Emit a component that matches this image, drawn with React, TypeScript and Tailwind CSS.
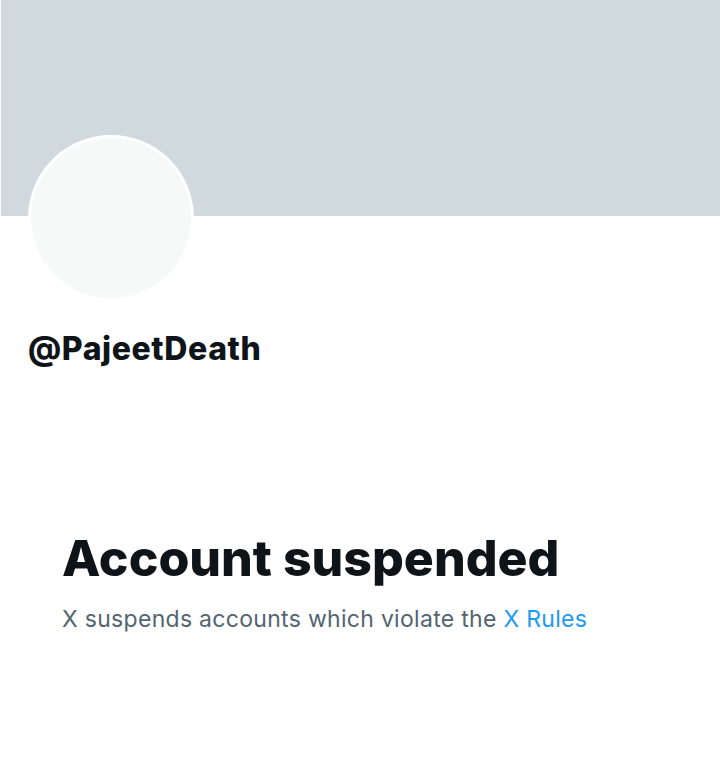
import React from 'react';

const SuspendedProfile: React.FC = () => {
  return (
    <div className="w-[720px] h-[784px] bg-white overflow-hidden" style={{ fontFamily: 'Inter, "Noto Sans", sans-serif' }}>
      {/* header banner */}
      <div className="ml-px h-[216px] bg-[#cfd9de]" />

      {/* avatar overlaps the banner */}
      <div className="pl-[28px] -mt-[81px]">
        <div className="w-[166px] h-[166px] rounded-full border-[3px] border-white bg-[#f7f9f9]" />
      </div>

      <div className="pl-[28px] mt-[28px]">
        <h2 className="text-[32px] leading-[40px] font-extrabold text-[#0f1419] tracking-[0.6px]">@PajeetDeath</h2>
      </div>

      <div className="pl-[62px] mt-[159px]">
        <h1 className="text-[50px] leading-[60px] font-extrabold text-[#0f1419] tracking-[0px]">Account suspended</h1>
        <p className="mt-[16px] text-[23px] leading-[30px] text-[#536471] tracking-[0.3px]">
          X suspends accounts which violate the <span className="text-[#1d9bf0]">X Rules</span>
        </p>
      </div>
    </div>
  );
};

export default function App() {
  return <SuspendedProfile />;
}
